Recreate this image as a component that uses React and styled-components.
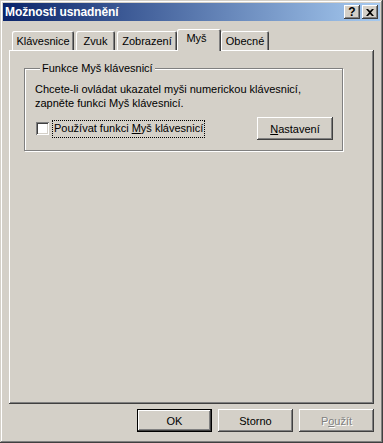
import React from "react";
import styled, { createGlobalStyle } from "styled-components";

const GlobalStyle = createGlobalStyle`
  html, body {
    margin: 0;
    padding: 0;
    background: #d4d0c8;
  }
  body {
    font-family: "Liberation Sans", Arial, sans-serif;
    font-size: 11px;
    color: #000;
  }
`;

const Window = styled.div`
  width: 383px;
  height: 443px;
  box-sizing: border-box;
  padding: 3px;
  display: flex;
  flex-direction: column;
  background: #d4d0c8;
  box-shadow: inset -1px -1px #404040, inset 1px 1px #d4d0c8,
    inset -2px -2px #808080, inset 2px 2px #ffffff;
`;

const TitleBar = styled.div`
  height: 18px;
  display: flex;
  align-items: center;
  padding: 0 2px 0 2px;
  background: linear-gradient(to right, #0a246a, #a6caf0);
`;

const Title = styled.div`
  flex: 1;
  color: #fff;
  font-weight: bold;
  font-size: 12px;
  letter-spacing: -0.1px;
`;

const TitleButtons = styled.div`
  display: flex;
  gap: 2px;
`;

const CaptionButton = styled.div`
  width: 16px;
  height: 14px;
  box-sizing: border-box;
  display: flex;
  align-items: center;
  justify-content: center;
  background: #d4d0c8;
  font-weight: bold;
  font-size: 12px;
  line-height: 14px;
  box-shadow: inset -1px -1px #404040, inset 1px 1px #ffffff,
    inset -2px -2px #808080, inset 2px 2px #d4d0c8;
`;

const Body = styled.div`
  flex: 1;
  display: flex;
  flex-direction: column;
  padding: 8px 6px 8px 6px;
`;

const TabRow = styled.div`
  height: 21px;
  display: flex;
  align-items: flex-end;
  gap: 2px;
  padding-left: 3px;
  position: relative;
  z-index: 1;
`;

const Tab = styled.div`
  width: ${({ $w, $active }) => ($active ? $w + 4 : $w)}px;
  height: ${({ $active }) => ($active ? "22px" : "19px")};
  margin: ${({ $active }) => ($active ? "0 -2px -1px -2px" : "0")};
  padding: ${({ $active }) => ($active ? "3px 5px 0 0" : "4px 0 0 0")};
  box-sizing: border-box;
  display: flex;
  justify-content: center;
  background: #d4d0c8;
  line-height: 13px;
  white-space: nowrap;
  border-radius: 2px 2px 0 0;
  box-shadow: inset 1px 1px #ffffff, inset -1px 0 #404040,
    inset -2px 0 #808080;
  position: relative;
  z-index: ${({ $active }) => ($active ? 2 : 1)};
`;

const Panel = styled.div`
  flex: 1;
  padding: 12px 31px 0 15px;
  box-shadow: inset -1px -1px #404040, inset 1px 1px #ffffff,
    inset -2px -2px #808080;
`;

const Group = styled.fieldset`
  margin: 0;
  padding: 7px 9px 10px 10px;
  border: 1px solid #808080;
  box-shadow: inset 1px 1px #ffffff, 1px 1px #ffffff;
  min-width: 0;
`;

const Legend = styled.legend`
  padding: 0 2px;
  margin-left: 5px;
  line-height: 13px;
  background: #d4d0c8;
`;

const Info = styled.p`
  margin: 0;
  line-height: 14px;
`;

const OptionRow = styled.div`
  margin-top: 7px;
  display: flex;
  align-items: center;
  justify-content: space-between;
`;

const CheckLabel = styled.label`
  display: flex;
  align-items: center;
  gap: 3px;
  margin-left: 1px;
`;

const Checkbox = styled.span`
  width: 13px;
  height: 13px;
  box-sizing: border-box;
  background: #fff;
  box-shadow: inset 1px 1px #808080, inset -1px -1px #ffffff,
    inset 2px 2px #404040, inset -2px -2px #d4d0c8;
`;

const Focus = styled.span`
  border: 1px dotted #000;
  padding: 1px 1px 2px 1px;
  line-height: 13px;
`;

const Key = styled.span`
  text-decoration: underline;
`;

const Button = styled.div`
  width: 75px;
  height: 23px;
  box-sizing: border-box;
  display: flex;
  align-items: center;
  justify-content: center;
  background: #d4d0c8;
  color: ${({ $disabled }) => ($disabled ? "#808080" : "#000")};
  text-shadow: ${({ $disabled }) => ($disabled ? "1px 1px 0 #ffffff" : "none")};
  box-shadow: ${({ $default }) =>
    $default
      ? "inset 0 0 0 1px #000, inset -2px -2px #404040, inset 2px 2px #ffffff, inset -3px -3px #808080"
      : "inset -1px -1px #404040, inset 1px 1px #ffffff, inset -2px -2px #808080, inset 2px 2px #d4d0c8"};
`;

const SettingsButton = styled(Button)`
  width: 76px;
`;

const ButtonRow = styled.div`
  margin-top: 5px;
  display: flex;
  justify-content: flex-end;
  gap: 6px;
`;

const tabs = [
  { label: "Klávesnice", w: 62 },
  { label: "Zvuk", w: 39 },
  { label: "Zobrazení", w: 60 },
  { label: "Myš", w: 40 },
  { label: "Obecné", w: 48 },
];

export default function App() {
  return (
    <>
      <GlobalStyle />
      <Window>
        <TitleBar>
          <Title>Možnosti usnadnění</Title>
          <TitleButtons>
            <CaptionButton>?</CaptionButton>
            <CaptionButton>
              <svg width="8" height="7" viewBox="0 0 8 7">
                <path
                  d="M0 0h2l2 2 2-2h2L5 3.5 8 7H6L4 5 2 7H0l3-3.5z"
                  fill="#000"
                />
              </svg>
            </CaptionButton>
          </TitleButtons>
        </TitleBar>
        <Body>
          <TabRow>
            {tabs.map((t) => (
              <Tab key={t.label} $w={t.w} $active={t.label === "Myš"}>
                {t.label}
              </Tab>
            ))}
          </TabRow>
          <Panel>
            <Group>
              <Legend>Funkce Myš klávesnicí</Legend>
              <Info>
                Chcete-li ovládat ukazatel myši numerickou klávesnicí,
                <br />
                zapněte funkci Myš klávesnicí.
              </Info>
              <OptionRow>
                <CheckLabel>
                  <Checkbox />
                  <Focus>
                    Používat funkci <Key>M</Key>yš klávesnicí
                  </Focus>
                </CheckLabel>
                <SettingsButton>
                  <Key>N</Key>astavení
                </SettingsButton>
              </OptionRow>
            </Group>
          </Panel>
          <ButtonRow>
            <Button $default>OK</Button>
            <Button>Storno</Button>
            <Button $disabled>
              P<Key>o</Key>užít
            </Button>
          </ButtonRow>
        </Body>
      </Window>
    </>
  );
}
